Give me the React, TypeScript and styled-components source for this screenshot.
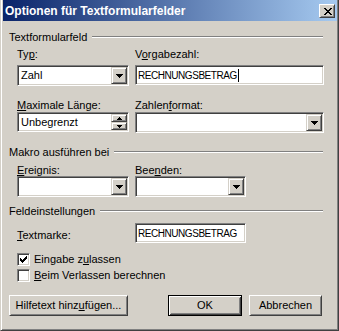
import React from "react";
import styled, { createGlobalStyle, css } from "styled-components";

const Global = createGlobalStyle`
  html, body { margin: 0; padding: 0; background: #d4d0c8; }
  body {
    font-family: "Liberation Sans", Arial, sans-serif;
    font-size: 11px;
    color: #000;
  }
  * { box-sizing: border-box; }
`;

const sunken = css`
  background: #fff;
  border: 1px solid;
  border-color: #808080 #fff #fff #808080;
  box-shadow: inset 1px 1px #404040, inset -1px -1px #d4d0c8;
  padding: 1px;
`;

const raised = css`
  background: #d4d0c8;
  border: 1px solid;
  border-color: #d4d0c8 #404040 #404040 #d4d0c8;
  box-shadow: inset 1px 1px #fff, inset -1px -1px #808080;
`;

const Window = styled.div`
  width: 339px;
  height: 331px;
  background: #d4d0c8;
  border-left: 1px solid #d4d0c8;
  border-right: 1px solid #404040;
  border-bottom: 1px solid #404040;
  box-shadow: inset 1px 0 #fff, inset -1px -1px #808080;
  padding: 0 1px 1px 2px;
  display: flex;
  flex-direction: column;
`;

const TitleBar = styled.div`
  height: 21px;
  display: flex;
  align-items: center;
  padding: 0 2px;
  background: linear-gradient(to right, #0a246a, #a6caf0);
`;

const Title = styled.div`
  flex: 1;
  color: #fff;
  font-weight: bold;
  font-size: 12px;
  line-height: 14px;
  white-space: nowrap;
`;

const CloseButton = styled.div`
  ${raised}
  border-color: #fff #404040 #404040 #fff;
  box-shadow: inset 1px 1px #d4d0c8, inset -1px -1px #808080;
  width: 16px;
  height: 14px;
  margin-top: 1px;
  display: flex;
  align-items: center;
  justify-content: center;
  padding-left: 1px;
`;

const Body = styled.div`
  display: flex;
  flex-direction: column;
  padding: 9px 0 0 6px;
`;

const GroupHeader = styled.div<{ $mt?: number }>`
  display: flex;
  align-items: center;
  gap: 5px;
  height: 14px;
  width: 314px;
  line-height: 14px;
  margin-top: ${(p) => p.$mt ?? 0}px;
  white-space: nowrap;
`;

const GroupLine = styled.div`
  flex: 1;
  height: 2px;
  border-top: 1px solid #808080;
  border-bottom: 1px solid #fff;
`;

const FieldGrid = styled.div<{ $mt: number; $rowGap?: number }>`
  display: grid;
  grid-template-columns: 112px 189px;
  column-gap: 6px;
  row-gap: ${(p) => p.$rowGap ?? 0}px;
  padding-left: 8px;
  margin-top: ${(p) => p.$mt}px;
  align-items: start;
`;

const Field = styled.div<{ $gap: number }>`
  display: flex;
  flex-direction: column;
  gap: ${(p) => p.$gap}px;
`;

const Label = styled.div`
  height: 11px;
  line-height: 11px;
  white-space: nowrap;
`;

const ComboBox = styled.div<{ $w: number }>`
  ${sunken}
  width: ${(p) => p.$w}px;
  height: 21px;
  display: flex;
  align-items: stretch;
`;

const ComboText = styled.div`
  flex: 1;
  padding-left: 2px;
  display: flex;
  align-items: center;
  line-height: 13px;
  white-space: nowrap;
`;

const DropButton = styled.div`
  ${raised}
  width: 16px;
  height: 17px;
  display: flex;
  align-items: center;
  justify-content: center;
  padding-top: 1px;
`;

const SpinBox = styled.div<{ $w: number }>`
  ${sunken}
  width: ${(p) => p.$w}px;
  height: 20px;
  display: flex;
`;

const SpinButtons = styled.div`
  display: flex;
  flex-direction: column;
  width: 16px;
`;

const SpinButton = styled.div`
  ${raised}
  height: 8px;
  display: flex;
  align-items: center;
  justify-content: center;
`;

const TextBox = styled.div<{ $w: number }>`
  ${sunken}
  width: ${(p) => p.$w}px;
  height: 20px;
  display: flex;
  align-items: center;
  padding-left: 2px;
`;

const CapsText = styled.span`
  font-size: 10px;
  letter-spacing: -0.45px;
  line-height: 13px;
  white-space: nowrap;
`;

const Caret = styled.span`
  display: inline-block;
  width: 1px;
  height: 13px;
  background: #000;
  margin-left: 1px;
`;

const InlineRow = styled.div<{ $mt: number }>`
  display: flex;
  align-items: flex-start;
  padding-left: 8px;
  margin-top: ${(p) => p.$mt}px;
`;

const InlineLabel = styled(Label)<{ $w: number; $mt: number }>`
  width: ${(p) => p.$w}px;
  margin-top: ${(p) => p.$mt}px;
`;

const CheckRow = styled.div<{ $mt: number }>`
  display: flex;
  align-items: center;
  gap: 4px;
  height: 13px;
  line-height: 13px;
  padding-left: 8px;
  margin-top: ${(p) => p.$mt}px;
  white-space: nowrap;
`;

const CheckBox = styled.div`
  ${sunken}
  width: 13px;
  height: 13px;
  display: flex;
  align-items: center;
  justify-content: center;
`;

const ButtonRow = styled.div`
  display: flex;
  margin-top: 13px;
`;

const Button = styled.div<{ $w: number; $ml?: number; $default?: boolean }>`
  width: ${(p) => p.$w}px;
  height: 21px;
  margin-left: ${(p) => p.$ml ?? 0}px;
  display: flex;
  align-items: center;
  justify-content: center;
  line-height: 13px;
  white-space: nowrap;
  background: #d4d0c8;
  ${(p) =>
    p.$default
      ? css`
          border: 1px solid #000;
          box-shadow: inset 1px 1px #fff, inset -1px -1px #404040,
            inset 2px 2px #d4d0c8, inset -2px -2px #808080;
        `
      : css`
          border: 1px solid;
          border-color: #fff #404040 #404040 #fff;
          box-shadow: inset 1px 1px #d4d0c8, inset -1px -1px #808080;
        `}
`;

function TriArrow({ w, up }: { w: number; up?: boolean }) {
  const rows = Math.ceil(w / 2);
  const rects = [];
  for (let i = 0; i < rows; i++) {
    const y = up ? rows - 1 - i : i;
    rects.push(<rect key={i} x={i} y={y} width={w - 2 * i} height={1} />);
  }
  return (
    <svg width={w} height={rows} viewBox={`0 0 ${w} ${rows}`} shapeRendering="crispEdges" fill="#000">
      {rects}
    </svg>
  );
}

function CloseGlyph() {
  const rows: [number, number][][] = [
    [[0, 2], [6, 2]],
    [[1, 2], [5, 2]],
    [[2, 4]],
    [[3, 2]],
    [[2, 4]],
    [[1, 2], [5, 2]],
    [[0, 2], [6, 2]],
  ];
  return (
    <svg width={8} height={7} viewBox="0 0 8 7" shapeRendering="crispEdges" fill="#000">
      {rows.flatMap((segs, y) =>
        segs.map(([x, w], i) => <rect key={`${y}-${i}`} x={x} y={y} width={w} height={1} />)
      )}
    </svg>
  );
}

function CheckGlyph() {
  const cols = [2, 3, 4, 3, 2, 1, 0];
  return (
    <svg width={7} height={7} viewBox="0 0 7 7" shapeRendering="crispEdges" fill="#000">
      {cols.map((y, x) => (
        <rect key={x} x={x} y={y} width={1} height={3} />
      ))}
    </svg>
  );
}

function Combo({ w, text }: { w: number; text?: string }) {
  return (
    <ComboBox $w={w}>
      <ComboText>{text}</ComboText>
      <DropButton>
        <TriArrow w={7} />
      </DropButton>
    </ComboBox>
  );
}

export default function App() {
  return (
    <>
      <Global />
      <Window>
        <TitleBar>
          <Title>Optionen für Textformularfelder</Title>
          <CloseButton>
            <CloseGlyph />
          </CloseButton>
        </TitleBar>
        <Body>
          <GroupHeader>
            <span>Textformularfeld</span>
            <GroupLine />
          </GroupHeader>
          <FieldGrid $mt={5} $rowGap={14}>
            <Field $gap={5}>
              <Label>
                Ty<u>p</u>:
              </Label>
              <Combo w={112} text="Zahl" />
            </Field>
            <Field $gap={5}>
              <Label>
                V<u>o</u>rgabezahl:
              </Label>
              <TextBox $w={189}>
                <CapsText>RECHNUNGSBETRAG</CapsText>
                <Caret />
              </TextBox>
            </Field>
            <Field $gap={1}>
              <Label>
                <u>M</u>aximale Länge:
              </Label>
              <SpinBox $w={112}>
                <ComboText>Unbegrenzt</ComboText>
                <SpinButtons>
                  <SpinButton>
                    <TriArrow w={5} up />
                  </SpinButton>
                  <SpinButton>
                    <TriArrow w={5} />
                  </SpinButton>
                </SpinButtons>
              </SpinBox>
            </Field>
            <Field $gap={1}>
              <Label>
                Zahlen<u>f</u>ormat:
              </Label>
              <Combo w={189} />
            </Field>
          </FieldGrid>

          <GroupHeader $mt={12}>
            <span>Makro ausführen bei</span>
            <GroupLine />
          </GroupHeader>
          <FieldGrid $mt={6}>
            <Field $gap={0}>
              <Label>
                <u>E</u>reignis:
              </Label>
              <Combo w={112} />
            </Field>
            <Field $gap={0}>
              <Label>
                Bee<u>n</u>den:
              </Label>
              <Combo w={111} />
            </Field>
          </FieldGrid>

          <GroupHeader $mt={7}>
            <span>Feldeinstellungen</span>
            <GroupLine />
          </GroupHeader>
          <InlineRow $mt={5}>
            <InlineLabel $w={118} $mt={7}>
              <u>T</u>extmarke:
            </InlineLabel>
            <TextBox $w={111}>
              <CapsText>RECHNUNGSBETRAG</CapsText>
            </TextBox>
          </InlineRow>
          <CheckRow $mt={10}>
            <CheckBox>
              <CheckGlyph />
            </CheckBox>
            <span>
              Eingabe z<u>u</u>lassen
            </span>
          </CheckRow>
          <CheckRow $mt={3}>
            <CheckBox />
            <span>
              <u>B</u>eim Verlassen berechnen
            </span>
          </CheckRow>
          <ButtonRow>
            <Button $w={119}>
              <span>
                Hilfetext hinz<u>u</u>fügen...
              </span>
            </Button>
            <Button $w={74} $ml={40} $default>
              OK
            </Button>
            <Button $w={73} $ml={7}>
              Abbrechen
            </Button>
          </ButtonRow>
        </Body>
      </Window>
    </>
  );
}
